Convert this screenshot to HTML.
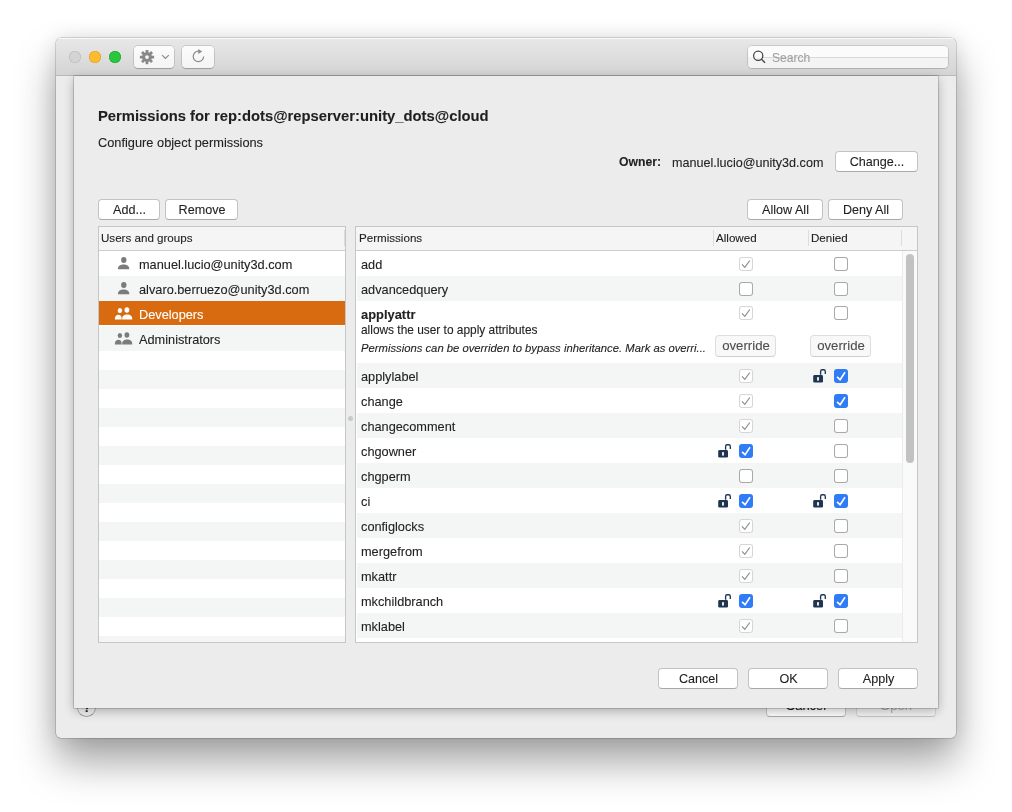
<!DOCTYPE html>
<html><head><meta charset="utf-8">
<style>
*{margin:0;padding:0;box-sizing:border-box}
html,body{width:1012px;height:812px;overflow:hidden;background:#fff;font-family:"Liberation Sans",sans-serif;color:#222}
.a{position:absolute}
.t{position:absolute;white-space:nowrap;-webkit-text-stroke:0.1px currentColor;will-change:transform}
#win{position:absolute;left:56px;top:38px;width:900px;height:700px;border-radius:5px;background:#ececec;
 box-shadow:0 0 0 0.5px rgba(0,0,0,.28),0 24px 40px rgba(0,0,0,.36),0 0 20px rgba(0,0,0,.10);overflow:hidden}
#title{position:absolute;left:0;top:0;width:900px;height:38px;background:linear-gradient(#e8e8e8,#d4d4d4);border-bottom:1px solid #b9b9b9;box-shadow:inset 0 1px 0 rgba(255,255,255,.75)}
.tl{position:absolute;top:13px;width:12px;height:12px;border-radius:50%}
.tbtn{position:absolute;top:8px;height:22px;background:linear-gradient(#fcfcfc,#f4f4f4);border-radius:4px;box-shadow:0 0 0 .5px rgba(0,0,0,.2),0 .5px 1px rgba(0,0,0,.2)}
#search{position:absolute;left:692px;top:8px;width:200px;height:22px;background:linear-gradient(#fbfbfb,#fbfbfb 50%,#f3f3f3 50%);border-radius:4px;box-shadow:0 0 0 .5px rgba(0,0,0,.22),0 .5px 1px rgba(0,0,0,.08)}
#sheet{position:absolute;left:74px;top:76px;width:864px;height:632px;background:#ececec;
 box-shadow:0 0 0 .5px rgba(0,0,0,.32),0 3px 10px rgba(0,0,0,.28)}
.btn{position:absolute;background:#fff;border-radius:4px;border:1px solid #c3c3c3;border-bottom-color:#a9a9a9}
.tbl{position:absolute;background:#fff;border:1px solid #c6c6c6;overflow:hidden}
.hdr{position:absolute;left:0;top:0;right:0;height:24px;background:#f5f5f5;border-bottom:1px solid #cdcdcd}
.g{position:absolute;background:#f4f5f5}
.cb{position:absolute;width:14px;height:14px;border-radius:3px;background:#fff}
.cbe{box-shadow:inset 0 0 0 1px #a9a9a9}
.cbd{box-shadow:inset 0 0 0 1px #d6d6d6}
.cbb{background:#2f7cf6}
</style></head>
<body>
<div id="win"><div id="title"><div class="tl" style="left:13px;background:#d4d4d4;box-shadow:inset 0 0 0 .6px #b8b8b8"></div><div class="tl" style="left:33px;background:#fdbb2e;box-shadow:inset 0 0 0 .6px #de9f22"></div><div class="tl" style="left:53px;background:#28c73f;box-shadow:inset 0 0 0 .6px #1ca730"></div><div class="tbtn" style="left:78px;width:40px"></div><div class="tbtn" style="left:126px;width:32px"></div><div id="search"></div></div></div>
<svg class="a" style="left:0;top:0" width="1012" height="812" viewBox="0 0 1012 812"><rect x="145.6" y="50.0" width="2.8" height="4" transform="rotate(0 147 57.1)" fill="#888"/><rect x="145.6" y="50.0" width="2.8" height="4" transform="rotate(45 147 57.1)" fill="#888"/><rect x="145.6" y="50.0" width="2.8" height="4" transform="rotate(90 147 57.1)" fill="#888"/><rect x="145.6" y="50.0" width="2.8" height="4" transform="rotate(135 147 57.1)" fill="#888"/><rect x="145.6" y="50.0" width="2.8" height="4" transform="rotate(180 147 57.1)" fill="#888"/><rect x="145.6" y="50.0" width="2.8" height="4" transform="rotate(225 147 57.1)" fill="#888"/><rect x="145.6" y="50.0" width="2.8" height="4" transform="rotate(270 147 57.1)" fill="#888"/><rect x="145.6" y="50.0" width="2.8" height="4" transform="rotate(315 147 57.1)" fill="#888"/><circle cx="147" cy="57.1" r="4.9" fill="#888"/><circle cx="147" cy="57.1" r="1.9" fill="#f9f9f9"/><path d="M162.1 55.1 L165.45 58.4 L168.8 55.1" fill="none" stroke="#8a8a8a" stroke-width="1.25"/><path d="M203.6 56.4 A5.2 5.2 0 1 1 198.4 51.2" fill="none" stroke="#8d8d8d" stroke-width="1.2"/><path d="M198.2 48.9 L198.2 53.9 L202.3 51.4 Z" fill="#8d8d8d"/></svg><div class="a" style="left:762px;top:57px;width:186px;height:1px;background:#dadada"></div><svg class="a" style="left:0;top:0" width="1012" height="812"><circle cx="758.2" cy="55.8" r="4.6" fill="none" stroke="#454545" stroke-width="1.25"/><path d="M761.4 59.1 L765 62.8" stroke="#454545" stroke-width="1.35"/></svg><div class="t" style="left:771.6px;top:50.74px;font-size:12.1px;line-height:15.73px;font-weight:normal;font-style:normal;color:#a2a2a2;">Search</div>
<div class="a" style="left:766px;top:696px;width:80px;height:21px;border-radius:4px;background:#fff;border:1px solid #c6c6c6;border-bottom-color:#a9a9a9"></div><div class="a" style="left:856px;top:696px;width:80px;height:21px;border-radius:4px;background:#f4f4f4;border:1px solid #d6d6d6;border-bottom-color:#c4c4c4"></div><div class="a" style="left:77px;top:698px;width:19px;height:19px;border-radius:50%;background:linear-gradient(#fff,#f1f1f1);border:1px solid rgba(0,0,0,.26);border-bottom-color:rgba(0,0,0,.36)"></div><div class="t" style="left:767.0px;top:698.05px;font-size:13px;line-height:16.9px;font-weight:normal;font-style:normal;color:#1e1e1e;width:78px;text-align:center;">Cancel</div>
<div class="t" style="left:857.0px;top:698.05px;font-size:13px;line-height:16.9px;font-weight:normal;font-style:normal;color:#b5b5b5;width:78px;text-align:center;">Open</div>
<div class="t" style="left:76.5px;top:699.65px;font-size:13px;line-height:16.9px;font-weight:bold;font-style:normal;color:#222;width:20px;text-align:center;">?</div>
<div id="sheet"></div>
<div class="t" style="left:98px;top:107.05px;font-size:14.8px;line-height:19.24px;font-weight:bold;font-style:normal;color:#1f1f1f;">Permissions for rep:dots@repserver:unity_dots@cloud</div>
<div class="t" style="left:98px;top:134.64px;font-size:12.8px;line-height:16.64px;font-weight:normal;font-style:normal;color:#222;">Configure object permissions</div>
<div class="t" style="left:618.5px;top:155.14px;font-size:12.2px;line-height:15.86px;font-weight:bold;font-style:normal;color:#222;">Owner:</div>
<div class="t" style="left:672.3px;top:154.74px;font-size:12.6px;line-height:16.38px;font-weight:normal;font-style:normal;color:#222;">manuel.lucio@unity3d.com</div>
<div class="btn" style="left:835px;top:151px;width:83px;height:21px"></div>
<div class="t" style="left:835.5px;top:154.14px;font-size:12.6px;line-height:16.38px;font-weight:normal;font-style:normal;color:#1e1e1e;width:82px;text-align:center;">Change...</div>
<div class="btn" style="left:98px;top:199px;width:62px;height:21px"></div>
<div class="t" style="left:98.5px;top:202.14px;font-size:12.6px;line-height:16.38px;font-weight:normal;font-style:normal;color:#1e1e1e;width:61px;text-align:center;">Add...</div>
<div class="btn" style="left:165px;top:199px;width:73px;height:21px"></div>
<div class="t" style="left:165.5px;top:202.14px;font-size:12.6px;line-height:16.38px;font-weight:normal;font-style:normal;color:#1e1e1e;width:72px;text-align:center;">Remove</div>
<div class="btn" style="left:747px;top:199px;width:76px;height:21px"></div>
<div class="t" style="left:747.5px;top:202.14px;font-size:12.6px;line-height:16.38px;font-weight:normal;font-style:normal;color:#1e1e1e;width:75px;text-align:center;">Allow All</div>
<div class="btn" style="left:828px;top:199px;width:75px;height:21px"></div>
<div class="t" style="left:828.5px;top:202.14px;font-size:12.6px;line-height:16.38px;font-weight:normal;font-style:normal;color:#1e1e1e;width:74px;text-align:center;">Deny All</div>
<div class="btn" style="left:658px;top:668px;width:80px;height:21px"></div>
<div class="t" style="left:658.5px;top:671.14px;font-size:12.6px;line-height:16.38px;font-weight:normal;font-style:normal;color:#1e1e1e;width:79px;text-align:center;">Cancel</div>
<div class="btn" style="left:748px;top:668px;width:80px;height:21px"></div>
<div class="t" style="left:748.5px;top:671.14px;font-size:12.6px;line-height:16.38px;font-weight:normal;font-style:normal;color:#1e1e1e;width:79px;text-align:center;">OK</div>
<div class="btn" style="left:838px;top:668px;width:80px;height:21px"></div>
<div class="t" style="left:838.5px;top:671.14px;font-size:12.6px;line-height:16.38px;font-weight:normal;font-style:normal;color:#1e1e1e;width:79px;text-align:center;">Apply</div>
<div class="tbl" style="left:98px;top:226px;width:248px;height:417px"><div class="hdr"></div></div>
<div class="a" style="left:344px;top:230px;width:1px;height:16px;background:#dcdcdc"></div><div class="t" style="left:100.6px;top:230.44px;font-size:11.6px;line-height:15.08px;font-weight:normal;font-style:normal;color:#222;">Users and groups</div>
<div class="g" style="left:99px;top:276px;width:246px;height:25px"></div><div class="g" style="left:99px;top:326px;width:246px;height:25px"></div><div class="a" style="left:99px;top:301px;width:246px;height:24px;background:#d86b10"></div><div class="g" style="left:99px;top:370px;width:246px;height:19px"></div><div class="g" style="left:99px;top:408px;width:246px;height:19px"></div><div class="g" style="left:99px;top:446px;width:246px;height:19px"></div><div class="g" style="left:99px;top:484px;width:246px;height:19px"></div><div class="g" style="left:99px;top:522px;width:246px;height:19px"></div><div class="g" style="left:99px;top:560px;width:246px;height:19px"></div><div class="g" style="left:99px;top:598px;width:246px;height:19px"></div><div class="g" style="left:99px;top:636px;width:246px;height:6px"></div><div class="t" style="left:139.4px;top:256.80px;font-size:12.75px;line-height:16.57px;font-weight:normal;font-style:normal;color:#222;">manuel.lucio@unity3d.com</div>
<div class="t" style="left:139.4px;top:281.80px;font-size:12.75px;line-height:16.57px;font-weight:normal;font-style:normal;color:#222;">alvaro.berruezo@unity3d.com</div>
<div class="t" style="left:139.4px;top:306.80px;font-size:12.75px;line-height:16.57px;font-weight:normal;font-style:normal;color:#fff;">Developers</div>
<div class="t" style="left:139.4px;top:331.80px;font-size:12.75px;line-height:16.57px;font-weight:normal;font-style:normal;color:#222;">Administrators</div>
<svg class="a" style="left:0;top:0" width="1012" height="812"><ellipse cx="123.8" cy="260" rx="2.7" ry="3" fill="#7b7b7b"/><path d="M118 269.3 L118 268.3 C118 263.10 129.2 263.10 129.2 268.3 L129.2 269.3 Z" fill="#7b7b7b"/><ellipse cx="123.8" cy="285" rx="2.7" ry="3" fill="#7b7b7b"/><path d="M118 294.3 L118 293.3 C118 288.10 129.2 288.10 129.2 293.3 L129.2 294.3 Z" fill="#7b7b7b"/><ellipse cx="119.9" cy="310.4" rx="2.2" ry="2.5" fill="#fff"/><ellipse cx="126.9" cy="310" rx="2.4" ry="2.8" fill="#fff"/><path d="M114.9 319.5 L114.9 318.5 C114.9 313.43 121.9 313.43 121.9 318.5 L121.9 319.5 Z" fill="#fff"/><path d="M121.6 319.5 L121.6 318.5 C121.6 312.37 132.4 312.37 132.4 318.5 L132.4 319.5 Z" fill="#d86b10"/><path d="M122.2 319.5 L122.2 318.5 C122.2 313.17 132.2 313.17 132.2 318.5 L132.2 319.5 Z" fill="#fff"/><ellipse cx="119.9" cy="335.4" rx="2.2" ry="2.5" fill="#7b7b7b"/><ellipse cx="126.9" cy="335" rx="2.4" ry="2.8" fill="#7b7b7b"/><path d="M114.9 344.5 L114.9 343.5 C114.9 338.43 121.9 338.43 121.9 343.5 L121.9 344.5 Z" fill="#7b7b7b"/><path d="M121.6 344.5 L121.6 343.5 C121.6 337.37 132.4 337.37 132.4 343.5 L132.4 344.5 Z" fill="#f4f5f5"/><path d="M122.2 344.5 L122.2 343.5 C122.2 338.17 132.2 338.17 132.2 343.5 L132.2 344.5 Z" fill="#7b7b7b"/></svg><div class="a" style="left:347.5px;top:415.5px;width:5px;height:5px;border-radius:50%;background:#c8c8c8"></div><div class="tbl" style="left:355px;top:226px;width:563px;height:417px"><div class="hdr"></div></div>
<div class="a" style="left:713px;top:230px;width:1px;height:16px;background:#dcdcdc"></div><div class="a" style="left:808px;top:230px;width:1px;height:16px;background:#dcdcdc"></div><div class="a" style="left:901px;top:230px;width:1px;height:16px;background:#dcdcdc"></div><div class="t" style="left:358.5px;top:230.44px;font-size:11.6px;line-height:15.08px;font-weight:normal;font-style:normal;color:#222;">Permissions</div>
<div class="t" style="left:716.3px;top:230.44px;font-size:11.6px;line-height:15.08px;font-weight:normal;font-style:normal;color:#222;">Allowed</div>
<div class="t" style="left:810.8px;top:230.44px;font-size:11.6px;line-height:15.08px;font-weight:normal;font-style:normal;color:#222;">Denied</div>
<div class="a" style="left:902px;top:251px;width:15px;height:391px;background:#fafafa;border-left:1px solid #ececec"></div><div class="a" style="left:906px;top:254px;width:8px;height:209px;border-radius:4px;background:#c2c2c2"></div><div class="t" style="left:361.4px;top:256.70px;font-size:12.75px;line-height:16.57px;font-weight:normal;font-style:normal;color:#222;">add</div>
<div class="cb cbd" style="left:739px;top:257px"><svg class="a" style="left:0;top:0" width="14" height="14"><path d="M3 7.4 L5.8 10.4 L10.8 3.5" fill="none" stroke="#8e8e8e" stroke-width="1.2"/></svg></div><div class="cb cbe" style="left:834px;top:257px"></div><div class="g" style="left:357px;top:276px;width:545px;height:25px"></div><div class="t" style="left:361.4px;top:281.70px;font-size:12.75px;line-height:16.57px;font-weight:normal;font-style:normal;color:#222;">advancedquery</div>
<div class="cb cbe" style="left:739px;top:282px"></div><div class="cb cbe" style="left:834px;top:282px"></div><div class="t" style="left:361.4px;top:306.55px;font-size:12.9px;line-height:16.77px;font-weight:bold;font-style:normal;color:#222;">applyattr</div>
<div class="t" style="left:361.4px;top:322.64px;font-size:11.9px;line-height:15.47px;font-weight:normal;font-style:normal;color:#222;">allows the user to apply attributes</div>
<div class="t" style="left:361.4px;top:341.17px;font-size:11.27px;line-height:14.65px;font-weight:normal;font-style:italic;color:#222;">Permissions can be overriden to bypass inheritance. Mark as overri...</div>
<div class="cb cbd" style="left:739px;top:306px"><svg class="a" style="left:0;top:0" width="14" height="14"><path d="M3 7.4 L5.8 10.4 L10.8 3.5" fill="none" stroke="#8e8e8e" stroke-width="1.2"/></svg></div><div class="cb cbe" style="left:834px;top:306px"></div><div class="g" style="left:357px;top:363px;width:545px;height:25px"></div><div class="t" style="left:361.4px;top:368.70px;font-size:12.75px;line-height:16.57px;font-weight:normal;font-style:normal;color:#222;">applylabel</div>
<div class="cb cbd" style="left:739px;top:369px"><svg class="a" style="left:0;top:0" width="14" height="14"><path d="M3 7.4 L5.8 10.4 L10.8 3.5" fill="none" stroke="#8e8e8e" stroke-width="1.2"/></svg></div><div class="cb cbb" style="left:834px;top:369px"><svg class="a" style="left:0;top:0" width="14" height="14"><path d="M3 7.8 L6.1 10.7 L11 3.2" fill="none" stroke="#fff" stroke-width="1.6"/></svg></div><svg class="a" style="left:813px;top:369px" width="14" height="14"><rect x="0.2" y="6.1" width="9.8" height="7.5" rx="1.4" fill="#1f3550"/><rect x="4.1" y="8.1" width="1.8" height="3.6" rx=".7" fill="#fff"/><path d="M7.6 5.8 V2.4 Q7.6 0.75 9.2 0.75 H10.7 Q12.3 0.75 12.3 2.4 V4.9" fill="none" stroke="#1f3550" stroke-width="1.35"/></svg><div class="t" style="left:361.4px;top:393.70px;font-size:12.75px;line-height:16.57px;font-weight:normal;font-style:normal;color:#222;">change</div>
<div class="cb cbd" style="left:739px;top:394px"><svg class="a" style="left:0;top:0" width="14" height="14"><path d="M3 7.4 L5.8 10.4 L10.8 3.5" fill="none" stroke="#8e8e8e" stroke-width="1.2"/></svg></div><div class="cb cbb" style="left:834px;top:394px"><svg class="a" style="left:0;top:0" width="14" height="14"><path d="M3 7.8 L6.1 10.7 L11 3.2" fill="none" stroke="#fff" stroke-width="1.6"/></svg></div><div class="g" style="left:357px;top:413px;width:545px;height:25px"></div><div class="t" style="left:361.4px;top:418.70px;font-size:12.75px;line-height:16.57px;font-weight:normal;font-style:normal;color:#222;">changecomment</div>
<div class="cb cbd" style="left:739px;top:419px"><svg class="a" style="left:0;top:0" width="14" height="14"><path d="M3 7.4 L5.8 10.4 L10.8 3.5" fill="none" stroke="#8e8e8e" stroke-width="1.2"/></svg></div><div class="cb cbe" style="left:834px;top:419px"></div><div class="t" style="left:361.4px;top:443.70px;font-size:12.75px;line-height:16.57px;font-weight:normal;font-style:normal;color:#222;">chgowner</div>
<div class="cb cbb" style="left:739px;top:444px"><svg class="a" style="left:0;top:0" width="14" height="14"><path d="M3 7.8 L6.1 10.7 L11 3.2" fill="none" stroke="#fff" stroke-width="1.6"/></svg></div><div class="cb cbe" style="left:834px;top:444px"></div><svg class="a" style="left:718px;top:444px" width="14" height="14"><rect x="0.2" y="6.1" width="9.8" height="7.5" rx="1.4" fill="#1f3550"/><rect x="4.1" y="8.1" width="1.8" height="3.6" rx=".7" fill="#fff"/><path d="M7.6 5.8 V2.4 Q7.6 0.75 9.2 0.75 H10.7 Q12.3 0.75 12.3 2.4 V4.9" fill="none" stroke="#1f3550" stroke-width="1.35"/></svg><div class="g" style="left:357px;top:463px;width:545px;height:25px"></div><div class="t" style="left:361.4px;top:468.70px;font-size:12.75px;line-height:16.57px;font-weight:normal;font-style:normal;color:#222;">chgperm</div>
<div class="cb cbe" style="left:739px;top:469px"></div><div class="cb cbe" style="left:834px;top:469px"></div><div class="t" style="left:361.4px;top:493.70px;font-size:12.75px;line-height:16.57px;font-weight:normal;font-style:normal;color:#222;">ci</div>
<div class="cb cbb" style="left:739px;top:494px"><svg class="a" style="left:0;top:0" width="14" height="14"><path d="M3 7.8 L6.1 10.7 L11 3.2" fill="none" stroke="#fff" stroke-width="1.6"/></svg></div><div class="cb cbb" style="left:834px;top:494px"><svg class="a" style="left:0;top:0" width="14" height="14"><path d="M3 7.8 L6.1 10.7 L11 3.2" fill="none" stroke="#fff" stroke-width="1.6"/></svg></div><svg class="a" style="left:718px;top:494px" width="14" height="14"><rect x="0.2" y="6.1" width="9.8" height="7.5" rx="1.4" fill="#1f3550"/><rect x="4.1" y="8.1" width="1.8" height="3.6" rx=".7" fill="#fff"/><path d="M7.6 5.8 V2.4 Q7.6 0.75 9.2 0.75 H10.7 Q12.3 0.75 12.3 2.4 V4.9" fill="none" stroke="#1f3550" stroke-width="1.35"/></svg><svg class="a" style="left:813px;top:494px" width="14" height="14"><rect x="0.2" y="6.1" width="9.8" height="7.5" rx="1.4" fill="#1f3550"/><rect x="4.1" y="8.1" width="1.8" height="3.6" rx=".7" fill="#fff"/><path d="M7.6 5.8 V2.4 Q7.6 0.75 9.2 0.75 H10.7 Q12.3 0.75 12.3 2.4 V4.9" fill="none" stroke="#1f3550" stroke-width="1.35"/></svg><div class="g" style="left:357px;top:513px;width:545px;height:25px"></div><div class="t" style="left:361.4px;top:518.70px;font-size:12.75px;line-height:16.57px;font-weight:normal;font-style:normal;color:#222;">configlocks</div>
<div class="cb cbd" style="left:739px;top:519px"><svg class="a" style="left:0;top:0" width="14" height="14"><path d="M3 7.4 L5.8 10.4 L10.8 3.5" fill="none" stroke="#8e8e8e" stroke-width="1.2"/></svg></div><div class="cb cbe" style="left:834px;top:519px"></div><div class="t" style="left:361.4px;top:543.70px;font-size:12.75px;line-height:16.57px;font-weight:normal;font-style:normal;color:#222;">mergefrom</div>
<div class="cb cbd" style="left:739px;top:544px"><svg class="a" style="left:0;top:0" width="14" height="14"><path d="M3 7.4 L5.8 10.4 L10.8 3.5" fill="none" stroke="#8e8e8e" stroke-width="1.2"/></svg></div><div class="cb cbe" style="left:834px;top:544px"></div><div class="g" style="left:357px;top:563px;width:545px;height:25px"></div><div class="t" style="left:361.4px;top:568.70px;font-size:12.75px;line-height:16.57px;font-weight:normal;font-style:normal;color:#222;">mkattr</div>
<div class="cb cbd" style="left:739px;top:569px"><svg class="a" style="left:0;top:0" width="14" height="14"><path d="M3 7.4 L5.8 10.4 L10.8 3.5" fill="none" stroke="#8e8e8e" stroke-width="1.2"/></svg></div><div class="cb cbe" style="left:834px;top:569px"></div><div class="t" style="left:361.4px;top:593.70px;font-size:12.75px;line-height:16.57px;font-weight:normal;font-style:normal;color:#222;">mkchildbranch</div>
<div class="cb cbb" style="left:739px;top:594px"><svg class="a" style="left:0;top:0" width="14" height="14"><path d="M3 7.8 L6.1 10.7 L11 3.2" fill="none" stroke="#fff" stroke-width="1.6"/></svg></div><div class="cb cbb" style="left:834px;top:594px"><svg class="a" style="left:0;top:0" width="14" height="14"><path d="M3 7.8 L6.1 10.7 L11 3.2" fill="none" stroke="#fff" stroke-width="1.6"/></svg></div><svg class="a" style="left:718px;top:594px" width="14" height="14"><rect x="0.2" y="6.1" width="9.8" height="7.5" rx="1.4" fill="#1f3550"/><rect x="4.1" y="8.1" width="1.8" height="3.6" rx=".7" fill="#fff"/><path d="M7.6 5.8 V2.4 Q7.6 0.75 9.2 0.75 H10.7 Q12.3 0.75 12.3 2.4 V4.9" fill="none" stroke="#1f3550" stroke-width="1.35"/></svg><svg class="a" style="left:813px;top:594px" width="14" height="14"><rect x="0.2" y="6.1" width="9.8" height="7.5" rx="1.4" fill="#1f3550"/><rect x="4.1" y="8.1" width="1.8" height="3.6" rx=".7" fill="#fff"/><path d="M7.6 5.8 V2.4 Q7.6 0.75 9.2 0.75 H10.7 Q12.3 0.75 12.3 2.4 V4.9" fill="none" stroke="#1f3550" stroke-width="1.35"/></svg><div class="g" style="left:357px;top:613px;width:545px;height:25px"></div><div class="t" style="left:361.4px;top:618.70px;font-size:12.75px;line-height:16.57px;font-weight:normal;font-style:normal;color:#222;">mklabel</div>
<div class="cb cbd" style="left:739px;top:619px"><svg class="a" style="left:0;top:0" width="14" height="14"><path d="M3 7.4 L5.8 10.4 L10.8 3.5" fill="none" stroke="#8e8e8e" stroke-width="1.2"/></svg></div><div class="cb cbe" style="left:834px;top:619px"></div><div class="a" style="left:715px;top:335px;width:61px;height:22px;border-radius:4px;background:#f8f8f8;border:1px solid #dedede;border-bottom-color:#cfcfcf"></div><div class="t" style="left:715.5px;top:337.05px;font-size:13.2px;line-height:17.16px;font-weight:normal;font-style:normal;color:#4d4d4d;width:60px;text-align:center;">override</div>
<div class="a" style="left:810px;top:335px;width:61px;height:22px;border-radius:4px;background:#f8f8f8;border:1px solid #dedede;border-bottom-color:#cfcfcf"></div><div class="t" style="left:810.5px;top:337.05px;font-size:13.2px;line-height:17.16px;font-weight:normal;font-style:normal;color:#4d4d4d;width:60px;text-align:center;">override</div>
</body></html>
